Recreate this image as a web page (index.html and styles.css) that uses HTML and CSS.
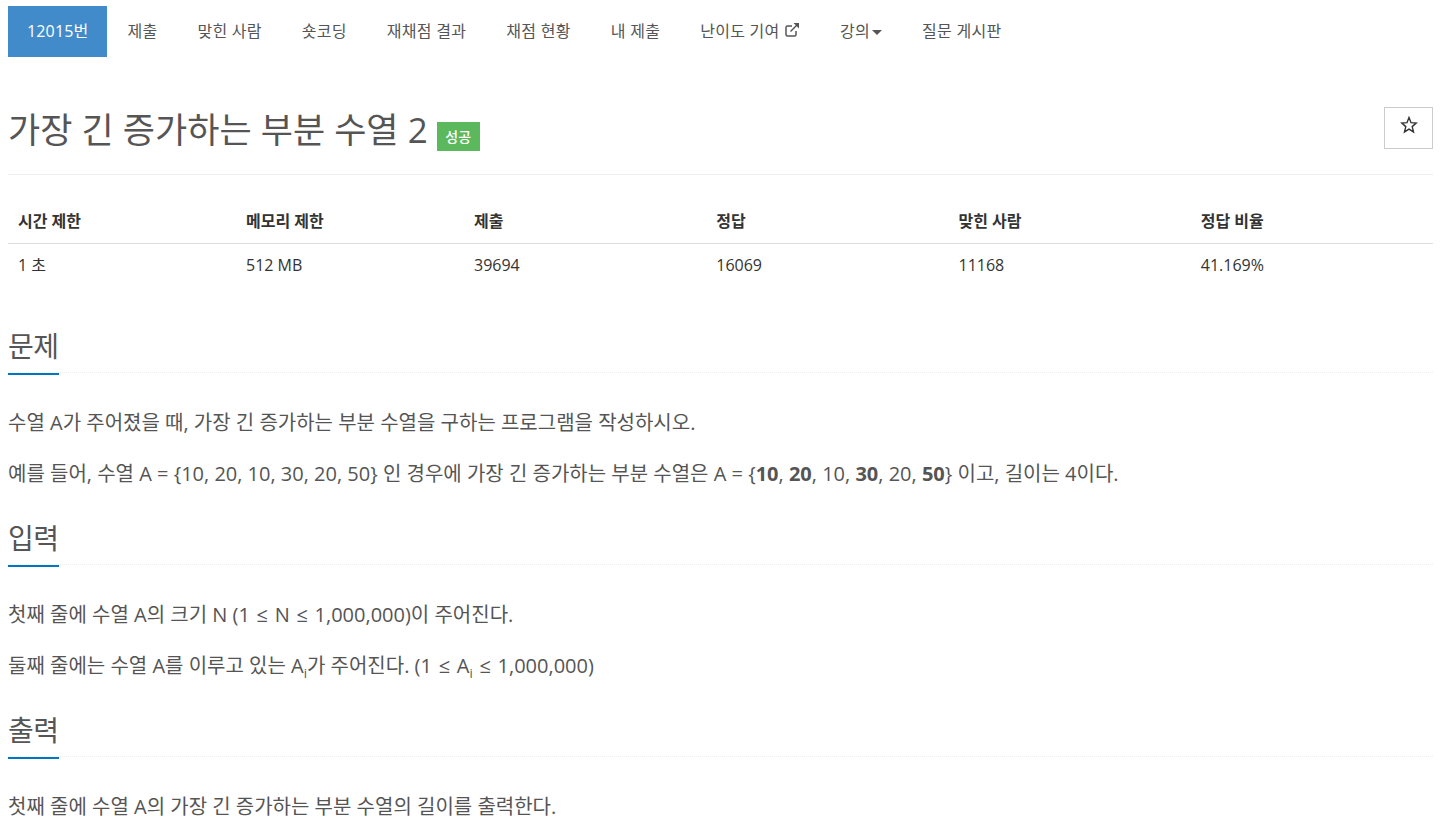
FILE: index.html
```html
<!DOCTYPE html>
<html lang="ko">
<head>
    <meta charset="UTF-8">
    <title>가장 긴 증가하는 부분 수열 2</title>
    <link rel="stylesheet" href="styles.css">
</head>
<body>
    <ul class="nav-tabs">
        <li class="active"><a href="#">12015번</a></li>
        <li><a href="#">제출</a></li>
        <li><a href="#">맞힌 사람</a></li>
        <li><a href="#">숏코딩</a></li>
        <li><a href="#">재채점 결과</a></li>
        <li><a href="#">채점 현황</a></li>
        <li><a href="#">내 제출</a></li>
        <li>
            <a href="#">난이도 기여
                <svg class="ext-icon" viewBox="0 0 16 16" width="16" height="16" fill="none" stroke="currentColor" stroke-width="1.5">
                    <path d="M12 9v3.500c0 .9-.6 1.500-1.500 1.500h-7C2.600 14 2 13.400 2 12.500v-7C2 4.600 2.600 4 3.500 4H8"/>
                    <path d="M6.500 9.500L14 2"/>
                    <path d="M9.500 1H15v5.500z" fill="currentColor" stroke="none"/>
                </svg>
            </a>
        </li>
        <li><a href="#">강의<span class="caret"></span></a></li>
        <li><a href="#">질문 게시판</a></li>
    </ul>

    <div class="page-header">
        <h1>가장 긴 증가하는 부분 수열 2 <span class="label-success">성공</span></h1>
        <button class="star-btn" type="button">
            <svg viewBox="0 0 18 18" width="18" height="18" fill="none" stroke="#333" stroke-width="1.4">
                <path d="M9 1.500L11 6.700l5.200.4-4 3.500 1.300 5.300L9 13.100l-4.500 2.800 1.300-5.300-4-3.500 5.200-.4z"/>
            </svg>
        </button>
    </div>

    <table class="info-table">
        <thead>
            <tr>
                <th class="narrow">시간 제한</th>
                <th class="narrow">메모리 제한</th>
                <th>제출</th>
                <th>정답</th>
                <th>맞힌 사람</th>
                <th>정답 비율</th>
            </tr>
        </thead>
        <tbody>
            <tr>
                <td>1 초</td>
                <td>512 MB</td>
                <td>39694</td>
                <td>16069</td>
                <td>11168</td>
                <td>41.169%</td>
            </tr>
        </tbody>
    </table>

    <section class="problem-section">
        <div class="headline"><h2>문제</h2></div>
        <p>수열 A가 주어졌을 때, 가장 긴 증가하는 부분 수열을 구하는 프로그램을 작성하시오.</p>
        <p>예를 들어, 수열 A = {10, 20, 10, 30, 20, 50} 인 경우에 가장 긴 증가하는 부분 수열은 A = {<strong>10</strong>, <strong>20</strong>, 10, <strong>30</strong>, 20, <strong>50</strong>} 이고, 길이는 4이다.</p>
    </section>

    <section class="problem-section">
        <div class="headline"><h2>입력</h2></div>
        <p>첫째 줄에 수열 A의 크기 N (<span class="math">1 ≤ N ≤ 1,000,000</span>)이 주어진다.</p>
        <p>둘째 줄에는 수열 A를 이루고 있는 A<sub>i</sub>가 주어진다. (<span class="math">1 ≤ A<sub>i</sub> ≤ 1,000,000</span>)</p>
    </section>

    <section class="problem-section">
        <div class="headline"><h2>출력</h2></div>
        <p>첫째 줄에 수열 A의 가장 긴 증가하는 부분 수열의 길이를 출력한다.</p>
    </section>
</body>
</html>
```

FILE: styles.css
```css
* {
    box-sizing: border-box;
}
html, body {
    height: 840px;
    overflow: hidden;
}
body {
    margin: 0;
    padding: 6px 8px 0;
    font-family: "Open Sans", "Noto Sans CJK KR", sans-serif;
    font-size: 16px;
    line-height: 22px;
    color: #333;
    background-color: #fff;
}
a {
    color: inherit;
    text-decoration: none;
}

/* top tabs */
.nav-tabs {
    display: flex;
    margin: 0;
    padding: 0;
    list-style: none;
}
.nav-tabs a {
    display: block;
    padding: 14px 20px 15px;
    letter-spacing: 0.28px;
    color: #555;
}
.nav-tabs .active a {
    padding: 14px 19px 15px;
    letter-spacing: 0.15px;
    background-color: #428bca;
    color: #fff;
}
.ext-icon {
    vertical-align: -1px;
}
.caret {
    display: inline-block;
    margin-left: 2px;
    border-top: 5px solid #555;
    border-left: 5px solid transparent;
    border-right: 5px solid transparent;
    vertical-align: middle;
}

/* title */
.page-header {
    display: flex;
    justify-content: space-between;
    align-items: flex-start;
    height: 68px;
    margin-top: 50px;
    border-bottom: 1px solid #eee;
}
h1 {
    margin: 0;
    font-size: 35px;
    font-weight: 400;
    line-height: 46px;
    color: #555;
}
.label-success {
    display: inline-block;
    height: 29px;
    padding: 0 8.5px;
    font-size: 14px;
    font-weight: 500;
    line-height: 29px;
    color: #fff;
    background-color: #5cb85c;
    vertical-align: 1px;
}
.star-btn {
    display: flex;
    align-items: center;
    justify-content: center;
    width: 49px;
    height: 42px;
    padding: 0 0 6px;
    background: #fff;
    border: 1px solid #ccc;
}

/* limits table */
.info-table {
    width: 100%;
    margin: 23px 0 40px;
    border-collapse: collapse;
    table-layout: fixed;
}
.info-table th, .info-table td {
    width: 17%;
    text-align: left;
}
.info-table th.narrow {
    width: 16%;
}
.info-table th {
    padding: 12px 10px 11px;
    font-weight: 700;
    border-bottom: 1px solid #ddd;
}
.info-table td {
    padding: 10px;
}

/* problem sections */
.problem-section {
    margin-top: 29px;
}
.headline {
    margin-bottom: 34px;
    border-bottom: 1px dotted #eee;
}
.headline h2 {
    display: inline-block;
    margin: 0 0 -3px;
    padding-bottom: 7px;
    font-size: 28px;
    font-weight: 400;
    letter-spacing: -0.4px;
    line-height: 40px;
    color: #555;
    border-bottom: 2px solid #0076c0;
}
.problem-section p {
    margin: 0 0 20px;
    font-size: 20px;
    line-height: 31px;
    color: #555;
}
.problem-section strong {
    font-weight: 700;
}
.problem-section sub {
    font-size: 13px;
    line-height: 0;
}
.math {
    word-spacing: 1.5px;
}
```
